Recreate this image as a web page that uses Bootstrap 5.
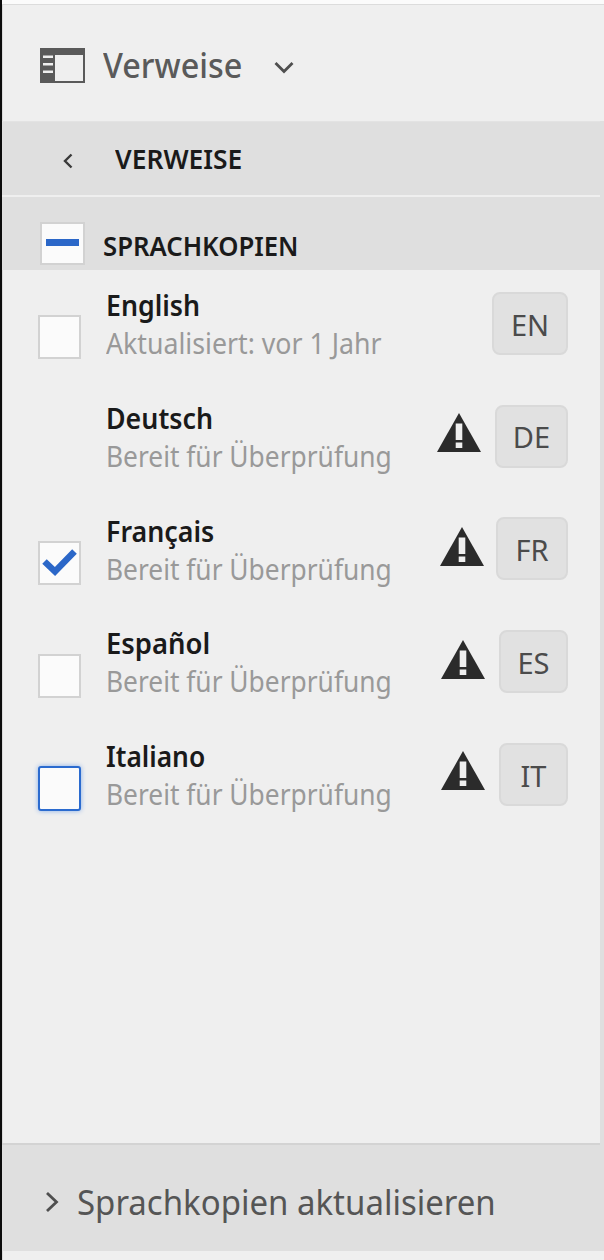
<!DOCTYPE html>
<html lang="de">
<head>
<meta charset="utf-8">
<meta name="viewport" content="width=device-width, initial-scale=1">
<title>Verweise</title>
<link href="https://cdn.jsdelivr.net/npm/bootstrap@5.3.0/dist/css/bootstrap.min.css" rel="stylesheet">
<script src="https://cdn.jsdelivr.net/npm/bootstrap@5.3.0/dist/js/bootstrap.bundle.min.js" defer></script>
<style>
body{margin:0;height:1260px;overflow:hidden;background:#efefef;font-family:"Noto Sans","Open Sans",sans-serif;color:#1a1a1a}
.panel{height:1260px;border-left:2px solid #0c0c0c;box-shadow:inset 1px 0 #dadada}
.topline{height:5px;background:#fbfbfb;border-bottom:1px solid #dcdcdc}
.rail-head{height:116px;padding:5px 0 0 38px;color:#5a5a5a}
.rail-title{margin-left:18px;width:171px;font-size:34px;font-weight:500}
.body-edge{border-right:4px solid #dfdfdf}
.band{background:#dfdfdf;font-weight:600;font-size:27px;line-height:36px}
.band-a{height:76px;border-bottom:2px solid #efefef;padding:0 0 0 57px;border-top:1px solid #e3e3e3}
.band-b{height:73px;padding:25px 0 0 38px}
/* condensed text, anchored at its left edge */
.fit{display:inline-block;white-space:nowrap;transform:scaleX(var(--sx,1));transform-origin:0 50%}
.lang-row{height:113px;padding:0 32px 0 36px}
.lang-row.short{height:112px}
.box{width:43px;height:44px;border:2px solid #d2d2d2;background:#fbfbfb;margin-top:45px;flex:none}
.box.low{margin-top:46px}
.box.none{visibility:hidden}
.box.focus{border-color:#2b6bcf;border-radius:3px;box-shadow:0 0 5px #86aee8;height:45px}
.band-b .box{width:45px;height:43px;margin-top:0}
.texts{margin-left:24.5px;width:292px;padding-top:16px}
.nm{font-weight:600;font-size:28px;line-height:38px;height:38px}
.st{font-size:29px;line-height:38px;height:38px;color:#999;--sx:.921}
.rev{--sx:.908}
.code{height:63px;margin-top:22px;border:2px solid #d9d9d9;border-radius:8px;background:#e1e1e1;font-size:29px;color:#4b4b4b;padding-top:9px;flex:none}
.warn{margin-top:30px;margin-right:14px}
.foot{height:108px;background:#dfdfdf;border-top:2px solid #d3d3d3;padding:8px 0 0 41px;color:#555;font-size:34px}
.list{height:873px}
svg{display:block;flex:none}
</style>
</head>
<body>
<svg class="d-none"><symbol id="warn" viewBox="0 0 44 39"><path fill="#2b2b2b" d="M22 0L44 39H0z"/><path fill="#efefef" d="M18.700 10.500h6.600v16.500h-6.600zM18.700 29.500h6.600v5.500h-6.600z"/></symbol></svg>
<div class="panel d-flex flex-column">
 <div class="topline"></div>
 <header class="rail-head d-flex align-items-center">
  <svg width="45" height="35" viewBox="0 0 45 35"><path fill="#5a5a5a" fill-rule="evenodd" d="M0 0H45V35H0zM15 7V33H43V7zM3 7.500V10H13V7.500zM3 15V17.500H13V15zM3 22.500V25H13V22.500z"/></svg>
  <span class="rail-title"><span class="fit" style="--sx:.952">Verweise</span></span>
  <svg width="20" height="13" viewBox="0 0 20 13" class="mt-1"><path d="M1.500 2L10 10.500 18.500 2" fill="none" stroke="#4f4f4f" stroke-width="2.800"/></svg>
 </header>
 <div class="body-edge">
  <div class="band band-a d-flex align-items-center">
   <svg width="14" height="18" viewBox="0 0 14 18" class="mt-1"><path d="M12.500 2.500L6 9l6.500 6.500" fill="none" stroke="#3a3a3a" stroke-width="2.400"/></svg>
   <span class="fit" style="margin-left:42px;padding-top:1px;--sx:.978">VERWEISE</span>
  </div>
  <div class="band band-b d-flex">
   <span class="box d-flex justify-content-center"><svg width="33" height="7" viewBox="0 0 33 7" style="margin-top:15px"><path fill="#2b67c8" d="M0 0h33v7H0z"/></svg></span>
   <span class="fit" style="margin-left:18px;margin-top:6px;--sx:.952">SPRACHKOPIEN</span>
  </div>
  <main class="list">
   <div class="lang-row d-flex align-items-start">
    <span class="box"></span>
    <div class="texts"><div class="nm"><span class="fit" style="--sx:.955">English</span></div><div class="st"><span class="fit">Aktualisiert: vor 1 Jahr</span></div></div>
    <span class="code ms-auto text-center" style="width:76px">EN</span>
   </div>
   <div class="lang-row short d-flex align-items-start">
    <span class="box none"></span>
    <div class="texts"><div class="nm"><span class="fit" style="--sx:.957">Deutsch</span></div><div class="st rev"><span class="fit">Bereit für Überprüfung</span></div></div>
    <svg class="warn ms-auto" width="44" height="39"><use href="#warn"/></svg>
    <span class="code text-center" style="width:73px;padding-top:8px">DE</span>
   </div>
   <div class="lang-row d-flex align-items-start">
    <span class="box low"><svg width="39" height="40" viewBox="0 0 39 40"><path d="M4.500 18.500L15 28.500 34.500 8.500" fill="none" stroke="#2b67c8" stroke-width="6.500"/></svg></span>
    <div class="texts" style="padding-top:17px"><div class="nm"><span class="fit" style="--sx:.958">Français</span></div><div class="st rev"><span class="fit">Bereit für Überprüfung</span></div></div>
    <svg class="warn ms-auto" style="margin:32px 12px 0 0" width="44" height="39"><use href="#warn"/></svg>
    <span class="code text-center" style="width:72px">FR</span>
   </div>
   <div class="lang-row d-flex align-items-start">
    <span class="box low"></span>
    <div class="texts"><div class="nm"><span class="fit" style="--sx:.98">Español</span></div><div class="st rev"><span class="fit">Bereit für Überprüfung</span></div></div>
    <svg class="warn ms-auto" style="margin-top:32px" width="44" height="39"><use href="#warn"/></svg>
    <span class="code text-center" style="width:69px">ES</span>
   </div>
   <div class="lang-row d-flex align-items-start">
    <span class="box focus"></span>
    <div class="texts"><div class="nm"><span class="fit" style="--sx:.94">Italiano</span></div><div class="st rev"><span class="fit">Bereit für Überprüfung</span></div></div>
    <svg class="warn ms-auto" width="44" height="39"><use href="#warn"/></svg>
    <span class="code text-center" style="width:69px">IT</span>
   </div>
  </main>
  <footer class="foot d-flex align-items-center">
   <svg width="16" height="22" viewBox="0 0 16 22"><path d="M4 2L13.500 11 4 20" fill="none" stroke="#4f4f4f" stroke-width="2.800"/></svg>
   <span class="fit" style="margin-left:18px;--sx:.97">Sprachkopien aktualisieren</span>
  </footer>
 </div>
</div>
</body>
</html>
